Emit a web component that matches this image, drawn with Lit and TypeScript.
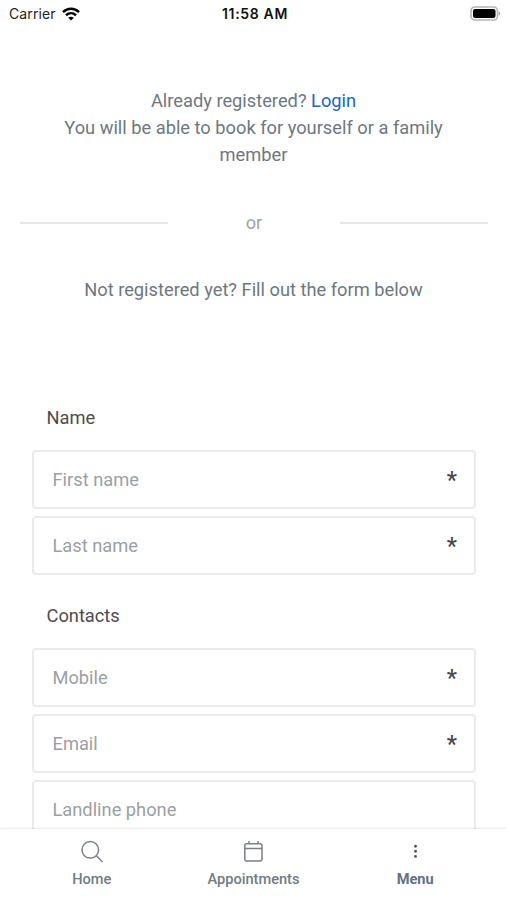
import { LitElement, html, css, svg, nothing } from "lit";
import { customElement, property } from "lit/decorators.js";

@customElement("status-bar")
class StatusBar extends LitElement {
  static styles = css`
    :host {
      display: grid;
      grid-template-columns: 1fr auto 1fr;
      align-items: center;
      height: 27px;
      padding: 0 6px 0 9px;
      box-sizing: border-box;
      font-family: Inter, "Liberation Sans", sans-serif;
      font-size: 14px;
      color: #222;
    }
    .carrier { display: flex; align-items: center; gap: 6px; letter-spacing: 0.1px; }
    .time { font-weight: 600; font-size: 14px; letter-spacing: 0.65px; color: #111; }
    .battery { justify-self: end; display: block; }
    svg { display: block; }
  `;
  render() {
    return html`
      <div class="carrier">
        <span>Carrier</span>
        <svg width="18" height="14" viewBox="0 0 18 14" fill="none" stroke="#000" stroke-width="2.500">
          <path d="M1 5.100C5.600.7 12.400.7 17 5.100" />
          <path d="M4 8.300c3-2.700 7-2.700 10 0" />
          <path d="M9 13.600 6.200 10.800c1.600-1.500 4-1.500 5.600 0z" fill="#000" stroke="none" />
        </svg>
      </div>
      <span class="time">11:58 AM</span>
      <svg class="battery" width="31" height="15" viewBox="0 0 31 15">
        <rect x="1" y="1" width="26.500" height="13" rx="4" fill="#fff" stroke="#b5b5b5" stroke-width="1.600" />
        <rect x="3" y="3" width="22.500" height="9" rx="2" fill="#000" />
        <path d="M28.700 5.500c2 .6 2 3.400 0 4z" fill="#aaa" />
      </svg>
    `;
  }
}

@customElement("form-field")
class FormField extends LitElement {
  @property() label = "";
  @property({ type: Boolean }) required = false;
  static styles = css`
    :host {
      display: flex;
      align-items: center;
      justify-content: space-between;
      height: 59px;
      box-sizing: border-box;
      padding: 0 17px 1px 18.500px;
      border: 2px solid #ebebeb;
      border-radius: 4px;
      color: #9b9fa3;
    }
    .mark { color: #4c4848; font-size: 23px; font-weight: 500; line-height: 24px; padding-top: 4px; }
  `;
  render() {
    return html`<span>${this.label}</span>${this.required ? html`<span class="mark">*</span>` : nothing}`;
  }
}

const icons = {
  search: svg`<circle cx="10.300" cy="9.800" r="8.300" /><path d="M16.300 15.800 22.500 22" />`,
  calendar: svg`<rect x="3.800" y="3.700" width="17.200" height="17.200" rx="1.800" /><path d="M3.800 8.500h17.200M8 1v2.700M17 1v2.700" />`,
  more: svg`<g stroke="none" fill="#555"><circle cx="12.500" cy="6.200" r="1.450" /><circle cx="12.500" cy="11.300" r="1.450" /><circle cx="12.500" cy="16.400" r="1.450" /></g>`,
};

@customElement("tab-bar")
class TabBar extends LitElement {
  static styles = css`
    :host {
      display: grid;
      grid-template-columns: repeat(3, 1fr);
      flex: none;
      height: 71px;
      box-sizing: border-box;
      padding: 11px 11px 0;
      background: #fff;
      box-shadow: 0 0 3px rgba(0, 0, 0, 0.18);
      z-index: 1;
      color: #717b84;
      font-size: 14.600px;
      font-weight: 500;
    }
    .tab { display: flex; flex-direction: column; align-items: center; gap: 5px; line-height: 20px; }
    .tab.active { font-weight: 700; color: #62727f; }
    svg { display: block; fill: none; stroke: #7b8087; stroke-width: 1.500; }
  `;
  render() {
    const tabs = [
      { name: "Home", icon: icons.search },
      { name: "Appointments", icon: icons.calendar },
      { name: "Menu", icon: icons.more, active: true },
    ];
    return tabs.map(
      (t) => html`<div class="tab ${t.active ? "active" : ""}">
        <svg width="24" height="24" viewBox="0 0 24 24">${t.icon}</svg>
        <span>${t.name}</span>
      </div>`
    );
  }
}

@customElement("app-root")
class AppRoot extends LitElement {
  static styles = css`
    :host {
      display: flex;
      flex-direction: column;
      height: 900px;
      overflow: hidden;
      background: #fff;
      font-family: Roboto, "Liberation Sans", sans-serif;
      font-size: 18.280px;
      line-height: 27px;
      color: #6d7780;
    }
    .content { flex: 1; min-height: 0; overflow: hidden; }
    .intro { margin: 60px 50px 0; text-align: center; }
    .link { color: #1a66cc; }
    .divider {
      display: grid;
      grid-template-columns: 148px 1fr 148px;
      align-items: center;
      margin: 41px 19px 0 20px;
      text-align: center;
      color: #a0a4a6;
    }
    .rule { height: 2px; background: #e6e6e6; }
    .hint { margin-top: 40px; text-align: center; }
    .form { margin: 101px 31px 0 32px; }
    .section { margin: 0 0 19px 14.500px; color: #504c4c; }
    .fields { display: grid; gap: 7px; margin-bottom: 27px; }
  `;
  render() {
    return html`
      <status-bar></status-bar>
      <div class="content">
        <div class="intro">
          Already registered? <span class="link">Login</span><br />
          You will be able to book for yourself or a family member
        </div>
        <div class="divider">
          <div class="rule"></div>
          <span>or</span>
          <div class="rule"></div>
        </div>
        <div class="hint">Not registered yet? Fill out the form below</div>
        <div class="form">
          <div class="section">Name</div>
          <div class="fields">
            <form-field label="First name" required></form-field>
            <form-field label="Last name" required></form-field>
          </div>
          <div class="section">Contacts</div>
          <div class="fields">
            <form-field label="Mobile" required></form-field>
            <form-field label="Email" required></form-field>
            <form-field label="Landline phone"></form-field>
          </div>
        </div>
      </div>
      <tab-bar></tab-bar>
    `;
  }
}
